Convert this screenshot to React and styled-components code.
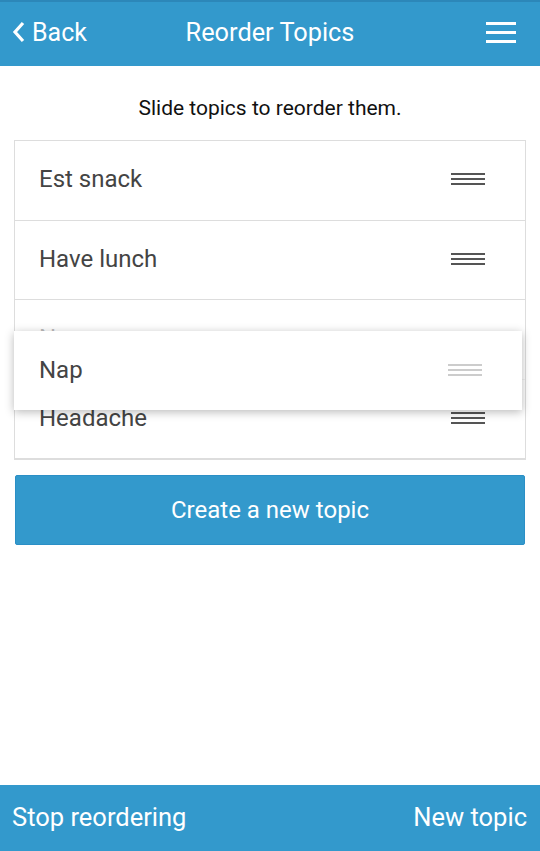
import styled, { createGlobalStyle } from "styled-components";

const GlobalStyle = createGlobalStyle`
  html, body {
    margin: 0;
    padding: 0;
    background: #fff;
  }
  body {
    font-family: Roboto, "Liberation Sans", sans-serif;
  }
`;

const BLUE = "#3399cc";

const Page = styled.div`
  width: 540px;
  height: 851px;
  display: flex;
  flex-direction: column;
  overflow: hidden;
`;

const Header = styled.header`
  height: 60px;
  border-top: 2px solid #2c87b9;
  background: ${BLUE};
  color: #fff;
  display: grid;
  grid-template-columns: 1fr auto 1fr;
  align-items: center;
  padding: 0 24px 4px 12px;
  font-size: 25px;
`;

const BackButton = styled.div`
  display: flex;
  align-items: center;
  gap: 7px;
`;

const Title = styled.h1`
  margin: 0;
  font-size: 25.3px;
  font-weight: 400;
  text-align: center;
  position: relative;
  left: 6px;
`;

const MenuButton = styled.div`
  display: flex;
  justify-content: flex-end;
`;

const Content = styled.main`
  padding: 0 14px;
`;

const Hint = styled.p`
  margin: 0;
  padding: 30px 0 20px;
  text-align: center;
  font-size: 21px;
  line-height: 24px;
  color: #111;
`;

const List = styled.div`
  position: relative;
  border: 1px solid #dddddd;
`;

const Row = styled.div`
  height: 79.5px;
  box-sizing: border-box;
  display: flex;
  align-items: center;
  justify-content: space-between;
  padding: 0 40px 2px 24px;
  font-size: 24px;
  color: #444;
  border-bottom: 1px solid #dddddd;
  opacity: ${(p) => (p.$ghost ? 0.35 : 1)};
  &:last-child {
    border-bottom: none;
  }
`;

const DragRow = styled(Row)`
  position: absolute;
  left: -1px;
  top: 190px;
  width: 508px;
  height: 79px;
  padding: 0 40px 1px 25px;
  background: #fff;
  border-bottom: none;
  box-shadow: 0 2px 9px rgba(0, 0, 0, 0.28);
`;

const Handle = styled.div`
  width: 34px;
  display: flex;
  flex-direction: column;
  gap: 3px;
  span {
    display: block;
    height: 2px;
    background: ${(p) => (p.$light ? "#cccccc" : "#555555")};
  }
`;

const CreateButton = styled.button`
  display: block;
  width: 510px;
  height: 70px;
  margin: 15px 0 0 1px;
  background: ${BLUE};
  border: 1px solid #2b8fc6;
  border-radius: 2px;
  color: #fff;
  font-family: inherit;
  font-size: 24px;
`;

const Footer = styled.footer`
  margin-top: auto;
  height: 63px;
  background: ${BLUE};
  color: #fff;
  font-size: 25.5px;
  display: flex;
  align-items: center;
  justify-content: space-between;
  padding: 0 13px 3px 12px;
`;

const DragHandle = ({ light }) => (
  <Handle $light={light}>
    <span />
    <span />
    <span />
  </Handle>
);

const topics = ["Est snack", "Have lunch", "Nap", "Headache"];

const App = () => {
  return (
    <>
      <GlobalStyle />
      <Page>
        <Header>
          <BackButton>
            <svg width="13" height="22" viewBox="0 0 13 22">
              <path d="M11 2 L3 11 L11 20" fill="none" stroke="#fff" strokeWidth="3.2" />
            </svg>
            Back
          </BackButton>
          <Title>Reorder Topics</Title>
          <MenuButton>
            <svg width="30" height="22" viewBox="0 0 30 22">
              <rect x="0" y="1" width="30" height="3" fill="#fff" />
              <rect x="0" y="10" width="30" height="3" fill="#fff" />
              <rect x="0" y="19" width="30" height="3" fill="#fff" />
            </svg>
          </MenuButton>
        </Header>
        <Content>
          <Hint>Slide topics to reorder them.</Hint>
          <List>
            {topics.map((t) => (
              <Row key={t} $ghost={t === "Nap"}>
                {t}
                <DragHandle />
              </Row>
            ))}
            <DragRow>
              Nap
              <DragHandle light />
            </DragRow>
          </List>
          <CreateButton>Create a new topic</CreateButton>
        </Content>
        <Footer>
          <span>Stop reordering</span>
          <span>New topic</span>
        </Footer>
      </Page>
    </>
  );
};

export default App;
